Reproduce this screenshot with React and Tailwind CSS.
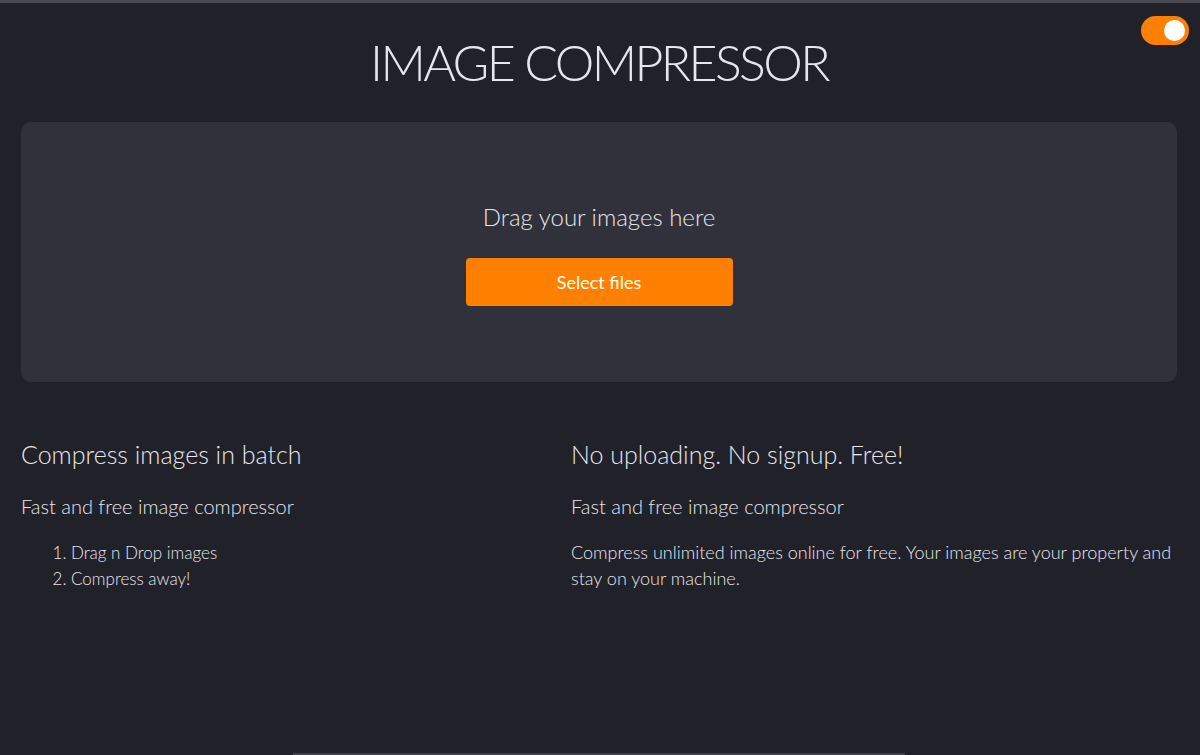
import React from "react";

export default function App() {
  return (
    <div
      className="relative w-[1200px] h-[755px] overflow-hidden bg-[#21212a] text-[#e6e6ec]"
      style={{ fontFamily: "Lato, 'Open Sans', sans-serif" }}
    >
      <div className="h-[3px] bg-[#4b4b52]" />
      <button className="absolute right-[11px] top-[16px] w-[48px] h-[29px] rounded-full bg-[#ff8000] flex items-center justify-end pr-[4px]">
        <span className="block w-[21px] h-[21px] rounded-full bg-white" />
      </button>
      <div className="pl-[21px] pr-[23px]">
        <h1 className="text-center text-[50px] font-light leading-none pt-[34px] pb-[35px] tracking-[-2.6px]">
          IMAGE COMPRESSOR
        </h1>
        <div className="h-[260px] rounded-[10px] bg-[#31313b] flex flex-col items-center pt-[83px]">
          <p className="text-[24px] font-light leading-none mb-[29px]">Drag your images here</p>
          <button className="w-[267px] h-[48px] rounded-[4px] bg-[#ff8000] text-white text-[18px] font-normal">
            Select files
          </button>
        </div>
        <div className="grid grid-cols-[550px_1fr] mt-[60px]">
          <div>
            <h2 className="text-[25px] font-light leading-none">Compress images in batch</h2>
            <h3 className="text-[20px] font-light leading-none mt-[29px]">Fast and free image compressor</h3>
            <ol className="list-decimal pl-[50px] mt-[24px] text-[17px] font-light leading-[26px]">
              <li>Drag n Drop images</li>
              <li>Compress away!</li>
            </ol>
          </div>
          <div>
            <h2 className="text-[25px] font-light leading-none">No uploading. No signup. Free!</h2>
            <h3 className="text-[20px] font-light leading-none mt-[29px]">Fast and free image compressor</h3>
            <p className="text-[18px] font-light leading-[26px] mt-[23px]">
              Compress unlimited images online for free. Your images are your property and stay on your machine.
            </p>
          </div>
        </div>
      </div>
      <div className="absolute bottom-0 left-[293px] w-[612px] h-[2px] bg-[#3f3f46]" />
    </div>
  );
}
